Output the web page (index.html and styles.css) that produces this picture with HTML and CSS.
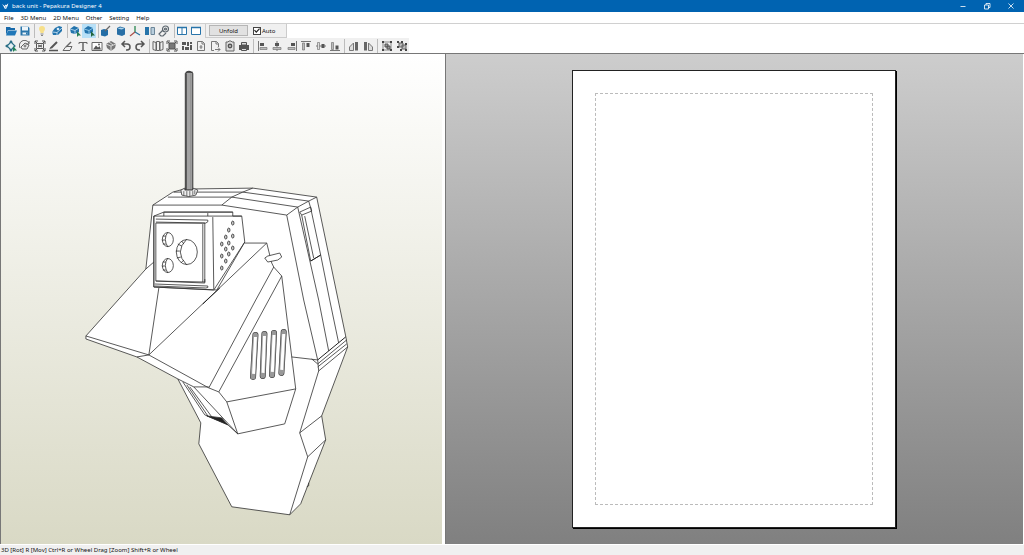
FILE: index.html
```html
<!DOCTYPE html>
<html lang="en">
<head>
<meta charset="utf-8">
<title>back unit - Pepakura Designer 4</title>
<link rel="stylesheet" href="styles.css">
</head>
<body>
<header class="titlebar">
  <svg class="app-icon" viewBox="0 0 10 10" aria-hidden="true"><path d="M0 2l4 3 1-2 1 1 3-3-1 4-2 4H4L2 5z" fill="#fff"/><path d="M4 5l2 1-1 2" stroke="#0063b1" fill="none" stroke-width=".7"/></svg>
  <h1 class="title">back unit - Pepakura Designer 4</h1>
  <div class="window-controls">
    <button aria-label="Minimize"><svg viewBox="0 0 8 8"><path d="M1.500 4.500h5"/></svg></button>
    <button aria-label="Restore"><svg viewBox="0 0 8 8"><path d="M1.500 3h4v4h-4zM3 3V1.500h4v4H5.500"/></svg></button>
    <button aria-label="Close"><svg viewBox="0 0 8 8"><path d="M1.500 1.500l5 5M6.500 1.500l-5 5"/></svg></button>
  </div>
</header>
<nav class="menubar">
  <button>File</button><button>3D Menu</button><button>2D Menu</button><button>Other</button><button>Setting</button><button>Help</button>
</nav>
<div class="toolbars">
  <div class="toolbar toolbar-main">
    <div class="group w28">
      <button class="tool" aria-label="Open"><svg viewBox="0 0 12 12"><path d="M1 2h4l1 1h4v2H3L1 10z" fill="#1769aa"/><path d="M3 5.500h9L10 10.500H1z" fill="#2178b8"/></svg></button>
      <button class="tool" aria-label="Save"><svg viewBox="0 0 12 12"><path d="M1.500 1.500H9l1.500 1.500v7.500h-9z" fill="#2874aa"/><path d="M3 1.500h6v4H3zM3.500 7.500h5v2h-5z" fill="#eef5fa"/><path d="M7 7.500h1.500v2H7z" fill="#2874aa"/></svg></button>
    </div>
    <div class="group ruled w29">
      <button class="tool" aria-label="Light"><svg viewBox="0 0 12 12"><path d="M6 1a3 3 0 0 0-3 3c0 1.600 1.500 2.200 1.500 4h3c0-1.800 1.500-2.400 1.500-4a3 3 0 0 0-3-3z" fill="#f7e08a"/><path d="M4.500 9h3M5 10.500h2" stroke="#888"/></svg></button>
      <button class="tool" aria-label="Erase edges"><svg viewBox="0 0 12 12"><path d="M1 7l3-4 4-2 3 1v4l-4 4H2z" fill="#2374ad"/><path d="M1 7l5 .5L11 3M6 7.500V10" stroke="#d8eaf7" fill="none" stroke-width=".8"/><circle cx="7" cy="4" r="1.300" fill="#d8eaf7"/></svg></button>
    </div>
    <div class="group ruled w28 wide-gap">
      <button class="tool" aria-label="Rotate model"><svg viewBox="0 0 12 12"><path d="M1 4l4-3 5 2v4L6 9 2 8z" fill="#2374ad"/><path d="M1 4l5 1.500L10 3M6 5.500V9" stroke="#cce5f5" fill="none" stroke-width=".8"/><path d="M8 6v6l1.500-1.500H12z" fill="#277e57"/></svg></button>
      <button class="tool active" aria-label="Select and move" aria-pressed="true"><svg viewBox="0 0 12 12"><path d="M1 4l4-3 5 2v4L6 9 2 8z" fill="#2374ad"/><path d="M1 4l5 1.500L10 3M6 5.500V9" stroke="#a7d8f4" fill="none" stroke-width=".8"/><path d="M8 6v6l1.500-1.500H12z" fill="#22653c"/></svg></button>
    </div>
    <div class="group ruled w72">
      <button class="tool" aria-label="Edit box"><svg viewBox="0 0 12 12"><path d="M1 5l3-1 4 1v5l-3 1.500-4-1z" fill="#236da6"/><path d="M5 6l5-5" stroke="#666" stroke-width="1.300"/></svg></button>
      <button class="tool" aria-label="Cylinder"><svg viewBox="0 0 12 12"><path d="M2 3l3-1.500L10 3v6.500L7 11 2 9.500z" fill="#286fa6"/><path d="M2.500 3.500l3-1 4 1-3 1z" fill="#afd4ea"/></svg></button>
      <button class="tool" aria-label="Axes"><svg viewBox="0 0 12 12"><path d="M6 1v6" stroke="#28864f" stroke-width="1.300"/><path d="M6 7l-5 4" stroke="#ad5048" stroke-width="1.300"/><path d="M6 7l5 3" stroke="#2874a0" stroke-width="1.300"/></svg></button>
      <button class="tool" aria-label="Mirror"><svg viewBox="0 0 12 12"><path d="M1 2h4v8H1z" fill="#2674aa"/><path d="M7 2.500h3.500v7H7z" fill="#b9cedd" stroke="#6c8699"/></svg></button>
      <button class="tool" aria-label="Inspect"><svg viewBox="0 0 12 12" fill="none" stroke="#5c666e" stroke-width="1.200"><circle cx="7.500" cy="4" r="3"/><circle cx="7.500" cy="4" r="1"/><path d="M5 5L1 9l2 2h2l3-3"/></svg></button>
    </div>
    <div class="group ruled w28 wide-gap">
      <button class="tool" aria-label="Two panes"><svg viewBox="0 0 12 12" fill="#fff" stroke="#2874aa"><path d="M1.500 2.500h9v7h-9zM6 2.500v7"/><path d="M1 2.500h10" stroke-width="1.500"/></svg></button>
      <button class="tool" aria-label="One pane"><svg viewBox="0 0 12 12" fill="#fff" stroke="#2874aa"><path d="M1.500 2.500h9v7h-9z"/><path d="M1 2.500h10" stroke-width="1.500"/></svg></button>
    </div>
    <div class="unfold-group">
      <button class="unfold">Unfold</button>
      <label class="auto" for="auto"><input id="auto" type="checkbox" checked>Auto</label>
    </div>
  </div>
  <div class="toolbar toolbar-edit">
    <div class="group w143">
      <button class="tool" aria-label="Move part"><svg viewBox="0 0 12 12" fill="none"><path d="M2 6l4-4 4 4-4 4z" fill="#e4eff3" stroke="#286d85" stroke-width="1.200"/><path d="M6 0L4 2.500h4zM0 6l2.500-2v4zM6 12L4 9.500h4z" fill="#286d85"/><path d="M8 6v6l1.500-1.500H12z" fill="#238357"/></svg></button>
      <button class="tool" aria-label="Rotate part"><svg viewBox="0 0 12 12" fill="none" stroke="#666"><path d="M1 8A5 5 0 0 1 10 3M10 1v3H7M3 9l-1-2 4-4 4 2-2 4z"/><circle cx="6" cy="6" r="1"/></svg></button>
      <button class="tool" aria-label="Join faces"><svg viewBox="0 0 12 12" fill="none" stroke="#555"><path d="M1 1l2 2M11 1L9 3M1 11l2-2M11 11L9 9M2.500 3.500h7v5h-7z"/><path d="M1 4V1h3M8 1h3v3M1 8v3h3M8 11h3V8M4 5l4 2M4 7l4-2"/></svg></button>
      <button class="tool" aria-label="Edit line"><svg viewBox="0 0 12 12" fill="none" stroke="#555"><path d="M1 10.500h9" stroke-width="1.500"/><path d="M3 8l6-6" stroke-width="2"/><path d="M2 9l1-2"/></svg></button>
      <button class="tool" aria-label="Edit flap"><svg viewBox="0 0 12 12" fill="none" stroke="#666"><path d="M1 10.500h7l2-4H4z"/><path d="M4 7l5-5" stroke-width="1.500"/></svg></button>
      <button class="tool" aria-label="Insert text"><svg viewBox="0 0 12 12" fill="none" stroke="#666"><path d="M2 4V2.500h8V4M4 10.500h4" /><path d="M6 2.500v8" stroke-width="1.500"/></svg></button>
      <button class="tool" aria-label="Insert image"><svg viewBox="0 0 12 12"><path d="M1 2.500h10v8H1z" fill="#fff" stroke="#666"/><path d="M2 9.500l3-4 2 2 1.500-1.500L10 9.500z" fill="#555"/><circle cx="8" cy="4.500" r="1" fill="#666"/></svg></button>
      <button class="tool" aria-label="Insert model"><svg viewBox="0 0 12 12"><path d="M1 4l5-3 5 3-1 4-4 3-4-3z" fill="#777"/><path d="M1 4l5 2 5-2M6 6v5M4 2l4 3" stroke="#eee" fill="none" stroke-width=".8"/></svg></button>
      <button class="tool" aria-label="Undo"><svg viewBox="0 0 12 12" fill="none" stroke="#555" stroke-width="1.500"><path d="M2 4h5a3 3 0 0 1 0 6H6M5 1L2 4l3 3"/></svg></button>
      <button class="tool" aria-label="Redo"><svg viewBox="0 0 12 12" fill="none" stroke="#555" stroke-width="1.500"><path d="M10 4H5a3 3 0 0 0 0 6h1M7 1l3 3-3 3"/></svg></button>
    </div>
    <div class="group ruled w100">
      <button class="tool" aria-label="Layout"><svg viewBox="0 0 12 12" fill="none" stroke="#666"><path d="M1 1.500l3 1v8l-3-1zM4.500 1.500h3v9h-3zM8 2.500l3-1v8l-3 1z"/></svg></button>
      <button class="tool" aria-label="Zoom to selection"><svg viewBox="0 0 12 12"><path d="M3 3h6v6H3z" fill="#777" stroke="#555"/><path d="M1 4V1h3M8 1h3v3M1 8v3h3M8 11h3V8M2 2l2 2M10 2L8 4M2 10l2-2M10 10L8 8" fill="none" stroke="#555"/></svg></button>
      <button class="tool" aria-label="Arrange"><svg viewBox="0 0 12 12" fill="#555"><path d="M1 2h4v3H1zM6 2h2v4H6zM9 2h2v2H9zM1 6h2v4H1zM4 7h4v3H4zM9 5h2v5H9z"/></svg></button>
      <button class="tool" aria-label="Page"><svg viewBox="0 0 12 12" fill="none" stroke="#777"><path d="M2.500 1.500h5l2 2v7h-7zM7 1.500V4h2.500M6 5v4M4.500 7h3"/></svg></button>
      <button class="tool" aria-label="Next page"><svg viewBox="0 0 12 12" fill="none" stroke="#777"><path d="M5 10.500H2.500v-9h5l2 2V7M7 1.500V4h2.500M6 9.500h5M9 7.500l2 2-2 2"/></svg></button>
      <button class="tool" aria-label="Capture"><svg viewBox="0 0 12 12"><path d="M2 2h2l1-1h2l1 1h2v9H2z" fill="#ddd" stroke="#666"/><circle cx="6" cy="6" r="2.400" fill="#555"/><path d="M5 6h2" stroke="#fff"/></svg></button>
      <button class="tool" aria-label="Print"><svg viewBox="0 0 12 12"><path d="M1 5h10v5H1z" fill="#555"/><path d="M3.500 2.500h5V5h-5zM3.500 8.500h5v2h-5z" fill="#ddd" stroke="#555"/></svg></button>
    </div>
    <div class="group ruled roomy w86">
      <button class="tool" aria-label="Align left"><svg viewBox="0 0 12 12"><path d="M1.500 1v10" stroke="#777"/><path d="M3 3h4v3H3z" fill="#555"/><path d="M3 7.500h7v2H3z" fill="#bbb" stroke="#777" stroke-width=".7"/></svg></button>
      <button class="tool" aria-label="Align center"><svg viewBox="0 0 12 12"><path d="M6 1v10" stroke="#777"/><path d="M4 3h4v3H4z" fill="#555"/><path d="M2 7.500h8v2H2z" fill="#bbb" stroke="#777" stroke-width=".7"/></svg></button>
      <button class="tool" aria-label="Align right"><svg viewBox="0 0 12 12"><path d="M10.500 1v10" stroke="#777"/><path d="M5 3h4v3H5z" fill="#555"/><path d="M2 7.500h7v2H2z" fill="#bbb" stroke="#777" stroke-width=".7"/></svg></button>
      <button class="tool" aria-label="Align top"><svg viewBox="0 0 12 12"><path d="M1 1.500h10" stroke="#777"/><path d="M6.500 3h3v4h-3z" fill="#555"/><path d="M2.500 3h2v7h-2z" fill="#bbb" stroke="#777" stroke-width=".7"/></svg></button>
      <button class="tool" aria-label="Align middle"><svg viewBox="0 0 12 12"><path d="M1 6h10" stroke="#777"/><path d="M6.500 4h3v4h-3z" fill="#555"/><path d="M2.500 2.500h2v7h-2z" fill="#ddd" stroke="#777" stroke-width=".7"/></svg></button>
      <button class="tool" aria-label="Align bottom"><svg viewBox="0 0 12 12"><path d="M1 10.500h10" stroke="#777"/><path d="M6.500 5.500h3v4h-3z" fill="#555"/><path d="M2.500 2.500h2v7h-2z" fill="#bbb" stroke="#777" stroke-width=".7"/></svg></button>
    </div>
    <div class="group ruled roomy w28">
      <button class="tool" aria-label="Rotate left"><svg viewBox="0 0 12 12"><path d="M7 2h3v8.500H7z" fill="#666"/><path d="M5.500 3v7.500h-4V7z" fill="#ddd" stroke="#777"/></svg></button>
      <button class="tool" aria-label="Rotate right"><svg viewBox="0 0 12 12"><path d="M2 2h3v8.500H2z" fill="#666"/><path d="M6.500 3v7.500h4V7z" fill="#ddd" stroke="#777"/></svg></button>
    </div>
    <div class="group ruled roomy w29">
      <button class="tool" aria-label="Group"><svg viewBox="0 0 12 12"><path d="M2 2h8v8H2z" fill="none" stroke="#888"/><path d="M4 4h3v3H4zM6 6h3v3H6z" fill="#999" stroke="#555"/><path d="M1 1h2v2H1zM9 1h2v2H9zM1 9h2v2H1zM9 9h2v2H9z" fill="#444"/></svg></button>
      <button class="tool" aria-label="Ungroup"><svg viewBox="0 0 12 12"><path d="M3 3h4v4H3zM6 5h4v4H6z" fill="#bbb" stroke="#666"/><path d="M1 1h2v2H1zM5 1h2v2H5zM9 3h2v2H9zM1 6h2v2H1zM4 9h2v2H4zM9 9h2v2H9z" fill="#444"/></svg></button>
    </div>
  </div>
</div>
<main class="workspace">
  <section class="pane-3d" aria-label="3D view">
    <svg class="model" viewBox="1 54 441 490" role="img" aria-label="Back unit model">
      <g class="edges">
        <path class="face" d="M86 336L146 269 153 205 173 192 184 189 253 188 317 197 346 336 348 347 322 416 326 440 301 504 290 515 232 507 199 444 201 423 178 379 137 357 86 339z"/>
        <path d="M153 205H222L287 215 298 207 309 201 317 197M168 197H232L298 207M174 192H243L309 201M222 205L232 197 243 192 253 188"/>
        <path d="M287 215L304 300 318 360M298 207L319 300 329 351M309 201L311 208 321 255 330 300 339 343"/>
        <path d="M300 212L311 207 312 211 302 215zM302 215L311 261 321 255M305 216L314 258"/>
        <path class="strong" d="M311 261L321 255M318 360L346 337"/>
        <path d="M292 357L318 360 319 371 300 433 322 416M312 359L318 364 347 340M318 367L347 344M319 371L348 347"/>
        <path d="M300 433L308 457 326 440M308 457L290 515M309 483V486L307 487"/>
        <path class="face" d="M154 216L164 212H233V216H242L245 242 217 290 154 287z"/>
        <path d="M164 212V216M164 212H233M208 213V216M154 216H242M213 217L214 289M154 216L154 287 214 290 245 242"/>
        <path d="M156 223H205V282L156 281zM203 224V282M156 219L208 220Q209 222 206 223L156 222M155 284L208 286Q209 288 206 288L155 286M156 281L205 283V279"/>
        <ellipse cx="168" cy="239.500" rx="5.500" ry="7"/><ellipse cx="168" cy="265.500" rx="5.500" ry="7"/>
        <ellipse cx="187" cy="252" rx="10.500" ry="12.500"/>
        <path d="M168 232Q163 239 168 247M168 258Q163 265 168 273M187 239Q174 252 187 265M163 236H166M162 240H165M163 244H166M163 262H166M162 266H165M163 270H166M178 244L182 246M176 251H180M177 258L181 257M182 241L184 244M181 263L184 260"/>
        <g class="holes"><ellipse cx="233" cy="223" rx="1.200" ry="2"/><ellipse cx="229" cy="230" rx="1.200" ry="2"/><ellipse cx="233" cy="236" rx="1.200" ry="2"/><ellipse cx="226" cy="237" rx="1.200" ry="2"/><ellipse cx="229" cy="243" rx="1.200" ry="2"/><ellipse cx="222" cy="244" rx="1.200" ry="2"/><ellipse cx="233" cy="248" rx="1.200" ry="2"/><ellipse cx="226" cy="249" rx="1.200" ry="2"/><ellipse cx="229" cy="254" rx="1.200" ry="2"/><ellipse cx="222" cy="256" rx="1.200" ry="2"/><ellipse cx="226" cy="261" rx="1.200" ry="2"/><ellipse cx="222" cy="268" rx="1.200" ry="2"/></g>
        <path d="M146 269L154 262M159 288L149 355M86 336L149 355 209 388 219 392 227 402 296 389M137 357L149 355M149 355L207 300 267 243H245"/>
        <path class="strong" d="M203 304L220 288"/>
        <path d="M267 243L272 263 274 267 282 276 285 300 296 389M274 267L256 300 209 388M282 276L269 300 219 392"/>
        <path class="face" d="M265 258L268 256 280 253 282 257 278 260 268 262z"/>
        <path d="M227 402L238 434 285 424 296 389M194 387H209M178 379L194 387 238 434M183 382L205 415 227 424 238 434M187 385L208 416M190 387L212 417"/>
        <path class="dark" d="M207 416L222 418 228 425z"/>
      </g>
      <g class="slots">
        <path class="slot-edge" d="M255.700 335L253.300 377M264.700 334L263 376M274.300 333L272.300 375M284 332L281.700 373"/>
        <path class="slot-rim" d="M255.700 335L253.300 377M264.700 334L263 376M274.300 333L272.300 375M284 332L281.700 373"/>
        <path class="slot-face" d="M255.700 337L253.800 374M264.700 336L263.300 373M274.300 335L272.600 372M284 334L282 370"/>
      </g>
      <g class="antenna">
        <path d="M185.500 190V73Q189 69 193 73V190z" fill="#a3a3a3" stroke="#333"/>
        <path d="M186.500 73V190" stroke="#555" stroke-width="1.200"/><path d="M191 73V190" stroke="#888" stroke-width=".7"/><path d="M186 72H193" stroke="#333"/>
        <path d="M181 190L185 188V190H193V188L198 190 196 195Q189 198 182 195z" fill="#eee" stroke="#333" stroke-width=".8"/>
        <path d="M184 191V195M187 191V196M190 191V196M193 191V195M195 190V194" stroke="#555" stroke-width=".8"/>
      </g>
    </svg>
  </section>
  <section class="pane-2d" aria-label="2D view">
    <div class="paper"><div class="margin-guide"></div></div>
  </section>
</main>
<footer class="statusbar">3D [Rot] R [Mov] Ctrl+R or Wheel Drag [Zoom] Shift+R or Wheel</footer>
</body>
</html>
```
FILE: styles.css
```css
* { box-sizing: border-box; }
html, body { height: 100%; }
body {
  margin: 0;
  display: flex;
  flex-direction: column;
  overflow: hidden;
  background: #fff;
  color: #111;
  font-family: "Noto Sans", "Open Sans", sans-serif;
  font-size: 6px;
  line-height: 10px;
}
button { margin: 0; padding: 0; border: 0; background: none; color: inherit; font: inherit; }
svg { display: block; }

.titlebar { display: flex; align-items: center; flex: none; height: 12px; padding: 0 1px 0 2px; background: #0063b1; color: #fff; }
.app-icon { width: 7px; height: 8px; }
.title { flex: 1; margin: 0 0 0 3px; font-size: 6px; font-weight: 400; }
.window-controls { display: flex; }
.window-controls button { display: flex; justify-content: center; align-items: center; width: 24px; height: 12px; }
.window-controls svg { width: 8px; height: 8px; fill: none; stroke: #fff; stroke-width: .8; }

.menubar { display: flex; flex: none; gap: 7px; height: 12px; padding: 0 4px; border-bottom: 1px solid #d0d0d0; }
.toolbars { flex: none; }
.toolbar { display: flex; align-items: center; width: max-content; height: 15px; padding-left: 4px; background: #f0f0f0; }
.toolbar-main { height: 14px; }
.group { display: flex; flex: none; justify-content: space-between; }
.ruled { box-sizing: content-box; margin-left: 2px; border-left: 1px solid #bcbcbc; }
.wide-gap { margin-left: 3px; }
.toolbar-edit .ruled { padding-left: 1px; }
.toolbar-edit .roomy { padding-left: 2px; }
.w28 { width: 28px; }
.w29 { width: 29px; }
.w72 { width: 72px; }
.w86 { width: 86px; }
.w100 { width: 100px; }
.w143 { width: 143px; }
.tool { display: flex; justify-content: center; align-items: center; width: 14px; height: 14px; }
.tool svg { width: 12px; height: 12px; }
.active { background: #b8e0f7; }
.unfold-group { display: flex; align-items: center; align-self: stretch; margin-left: 2px; padding: 0 11px 0 3px; border: 1px solid #ccc; border-width: 0 1px 1px; }
.unfold { width: 39px; height: 11px; border: 1px solid #b5b5b5; background: #e1e1e1; line-height: 8px; }
.auto { display: flex; align-items: center; gap: 1px; margin-left: 5px; }
.auto input {
  display: grid;
  place-items: center;
  appearance: none;
  width: 8px;
  height: 8px;
  margin: 0;
  border: 1px solid #444;
  background: #fff;
}
.auto input:checked::before {
  content: "";
  width: 6px;
  height: 6px;
  background: #222;
  clip-path: polygon(0 50%, 15% 38%, 38% 62%, 85% 12%, 100% 25%, 38% 90%);
}

.workspace { display: flex; flex: 1; min-height: 0; padding-right: 1px; border-top: 1px solid #777; }
.pane-3d { flex: 441; min-width: 0; border-left: 1px solid #777; background: linear-gradient(#fff, #d9d9c5); }
.model { width: 100%; height: 100%; }
.pane-2d { display: flex; flex: 578; justify-content: center; align-items: center; min-width: 0; margin-left: 3px; border-left: 1px solid #777; background: linear-gradient(#cdcdcd, #808080); }
.paper { height: 93.500%; aspect-ratio: 324 / 458; padding: 22px; border: 1px solid #222; background: #fff; box-shadow: 1px 1px #000; }
.margin-guide { height: 100%; border: 1px dashed #bbb; }

.edges { fill: none; stroke: #303030; stroke-width: .8; stroke-linejoin: round; }
.face { fill: #fff; }
.strong { stroke: #222; stroke-width: 1; }
.dark { fill: #222; }
.holes { fill: #ddd; stroke: #222; }
.slots { fill: none; stroke-linecap: round; }
.slot-edge { stroke: #333; stroke-width: 6; }
.slot-rim { stroke: #999; stroke-width: 5; }
.slot-face { stroke: #fff; stroke-width: 3; stroke-linecap: butt; }
.antenna { fill: none; }
.statusbar { flex: none; height: 11px; padding-left: 1px; border-top: 1px solid #fff; background: #f0f0f0; }
```
